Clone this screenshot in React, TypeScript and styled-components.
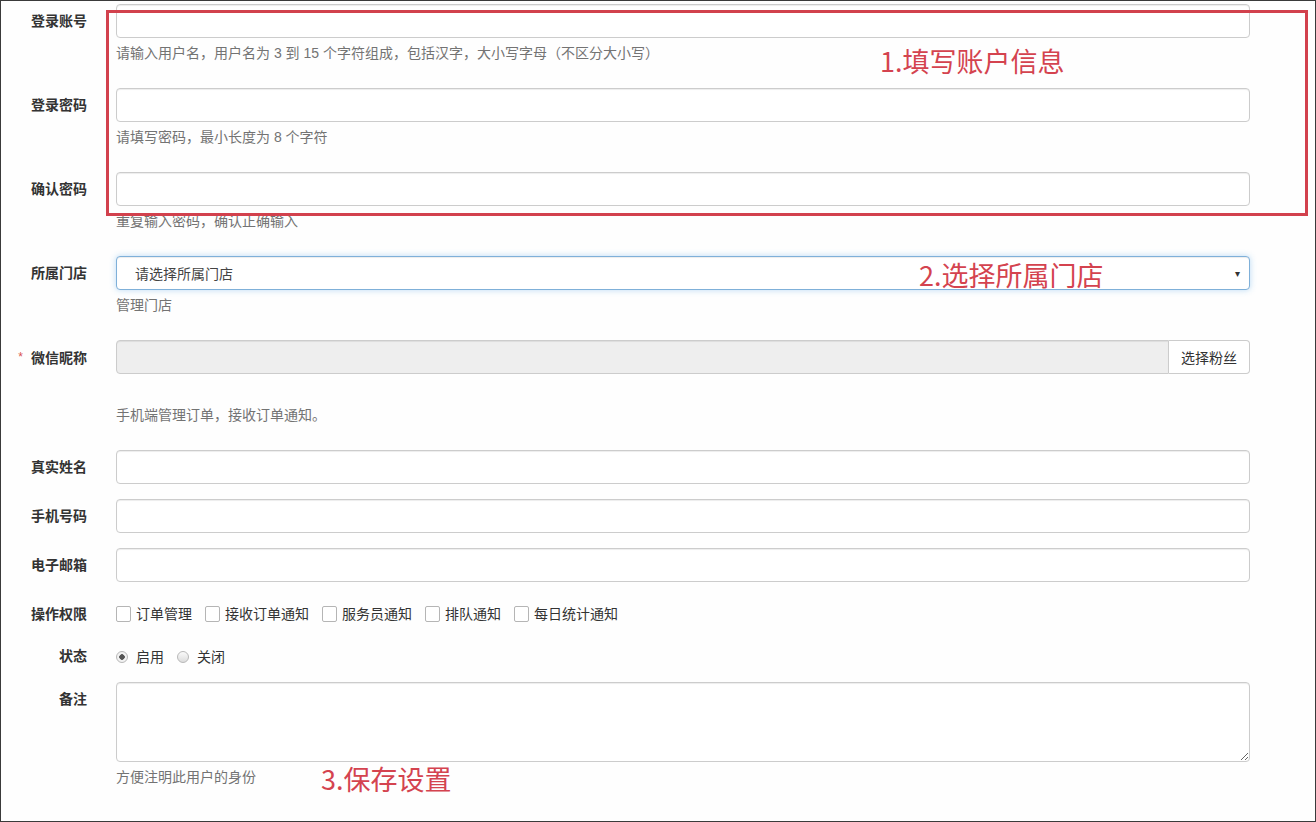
import React from 'react';
import styled, { createGlobalStyle } from 'styled-components';

const GlobalStyle = createGlobalStyle`
	html, body {
		margin: 0;
		padding: 0;
		background: #ffffff;
		overflow: hidden;
	}
	* {
		box-sizing: border-box;
	}
`;

const FONT = `"Liberation Sans", "Noto Sans CJK SC", sans-serif`;

interface IField {
	label: string;
	help?: string;
}

const accountFields: IField[] = [
	{
		label: '登录账号',
		help: '请输入用户名，用户名为 3 到 15 个字符组成，包括汉字，大小写字母（不区分大小写）',
	},
	{ label: '登录密码', help: '请填写密码，最小长度为 8 个字符' },
	{ label: '确认密码', help: '重复输入密码，确认正确输入' },
];

const profileFields: IField[] = [
	{ label: '真实姓名' },
	{ label: '手机号码' },
	{ label: '电子邮箱' },
];

const permissions = ['订单管理', '接收订单通知', '服务员通知', '排队通知', '每日统计通知'];

const App = () => {
	return (
		<>
			<GlobalStyle />
			<Page>
				<Form>
					{accountFields.map((field) => (
						<Row key={field.label}>
							<Label>{field.label}</Label>
							<Control>
								<TextInput type="text" />
								<Help>{field.help}</Help>
							</Control>
						</Row>
					))}

					<Row>
						<Label>所属门店</Label>
						<Control>
							<SelectBox>
								<span>请选择所属门店</span>
								<Caret>▾</Caret>
							</SelectBox>
							<Help>管理门店</Help>
						</Control>
					</Row>

					<Row>
						<Label>
							<Required>*</Required>微信昵称
						</Label>
						<Control>
							<InputGroup>
								<TextInput type="text" disabled $grouped />
								<AddonButton type="button">选择粉丝</AddonButton>
							</InputGroup>
							<Help $gap={31}>手机端管理订单，接收订单通知。</Help>
						</Control>
					</Row>

					{profileFields.map((field) => (
						<Row key={field.label}>
							<Label>{field.label}</Label>
							<Control>
								<TextInput type="text" />
							</Control>
						</Row>
					))}

					<Row>
						<Label>操作权限</Label>
						<InlineList>
							{permissions.map((name) => (
								<Choice key={name}>
									<CheckBox type="checkbox" />
									{name}
								</Choice>
							))}
						</InlineList>
					</Row>

					<Row>
						<Label $compact>状态</Label>
						<InlineList $compact>
							<Choice>
								<Radio type="radio" name="status" defaultChecked />
								启用
							</Choice>
							<Choice>
								<Radio type="radio" name="status" />
								关闭
							</Choice>
						</InlineList>
					</Row>

					<Row>
						<Label>备注</Label>
						<Control>
							<TextArea />
							<Help>方便注明此用户的身份</Help>
						</Control>
					</Row>
				</Form>

				<Frame />
				<Note style={{ left: 879, top: 45 }}>1.填写账户信息</Note>
				<Note style={{ left: 918, top: 259 }}>2.选择所属门店</Note>
				<Note style={{ left: 320, top: 763 }}>3.保存设置</Note>
			</Page>
		</>
	);
};

export default App;

const Page = styled.div`
	position: relative;
	width: 1316px;
	height: 822px;
	border: 1px solid #3a3a3a;
	background: #fefefe;
	font-family: ${FONT};
	font-size: 14px;
	color: #333;
	overflow: hidden;
`;

const Form = styled.form`
	display: flex;
	flex-direction: column;
	padding-top: 3px;
`;

const Row = styled.div`
	display: grid;
	grid-template-columns: 86px 1134px;
	column-gap: 29px;
	align-items: start;
	margin-bottom: 15px;
`;

const Label = styled.label<{ $compact?: boolean }>`
	padding-top: ${(p) => (p.$compact ? '0' : '7px')};
	line-height: 20px;
	text-align: right;
	font-weight: bold;
	color: #333;
	white-space: nowrap;
`;

const Required = styled.span`
	color: #d9534f;
	font-weight: normal;
	font-size: 12px;
	margin-right: 8px;
	vertical-align: 2px;
`;

const Control = styled.div`
	display: flex;
	flex-direction: column;
`;

const TextInput = styled.input<{ $grouped?: boolean }>`
	display: block;
	width: 100%;
	height: 34px;
	padding: 6px 12px;
	border: 1px solid #ccc;
	border-radius: ${(p) => (p.$grouped ? '4px 0 0 4px' : '4px')};
	background: #fff;
	box-shadow: inset 0 1px 1px rgba(0, 0, 0, 0.075);
	font-family: ${FONT};
	font-size: 14px;
	outline: none;

	&:disabled {
		background: #eeeeee;
	}
`;

const Help = styled.p<{ $gap?: number }>`
	margin: ${(p) => p.$gap ?? 5}px 0 10px;
	line-height: 20px;
	color: #737373;
	font-size: 14px;
`;

const SelectBox = styled.div`
	display: flex;
	align-items: center;
	justify-content: space-between;
	height: 34px;
	padding: 0 9px 0 18px;
	border: 1px solid #7fb0d9;
	border-radius: 4px;
	background: #fff;
	box-shadow: inset 0 1px 1px rgba(0, 0, 0, 0.075), 0 0 6px rgba(102, 175, 233, 0.45);
	color: #444;
`;

const Caret = styled.span`
	font-size: 10px;
	color: #333;
`;

const InputGroup = styled.div`
	display: flex;
`;

const AddonButton = styled.button`
	flex: 0 0 81px;
	height: 34px;
	border: 1px solid #ccc;
	border-left: none;
	border-radius: 0 4px 4px 0;
	background: #fff;
	font-family: ${FONT};
	font-size: 14px;
	color: #333;
	padding: 0;
`;

const InlineList = styled.div<{ $compact?: boolean }>`
	display: flex;
	align-items: center;
	gap: 13px;
	height: ${(p) => (p.$compact ? '21px' : '34px')};
`;

const Choice = styled.label`
	display: flex;
	align-items: center;
	gap: 5px;
	color: #333;
	line-height: 20px;
`;

const CheckBox = styled.input`
	appearance: none;
	margin: 0;
	width: 15px;
	height: 16px;
	border: 1px solid #b5b5b5;
	border-radius: 2px;
	background: #fff;
`;

const Radio = styled.input`
	appearance: none;
	margin: 0 3px 0 0;
	width: 12px;
	height: 12px;
	border: 1px solid #b8b8b8;
	border-radius: 50%;
	background: linear-gradient(#fafafa, #dcdcdc);

	&:checked {
		background: radial-gradient(circle, #555 0 2.5px, #f2f2f2 3px);
	}
`;

const TextArea = styled.textarea`
	display: block;
	width: 100%;
	height: 80px;
	padding: 6px 12px;
	border: 1px solid #ccc;
	border-radius: 4px;
	box-shadow: inset 0 1px 1px rgba(0, 0, 0, 0.075);
	font-family: ${FONT};
	font-size: 14px;
	outline: none;
	resize: vertical;
`;

const Frame = styled.div`
	position: absolute;
	left: 105px;
	top: 9px;
	width: 1202px;
	height: 206px;
	border: 3px solid #d2414d;
	pointer-events: none;
`;

const Note = styled.div`
	position: absolute;
	font-family: "Noto Sans CJK SC", sans-serif;
	font-size: 27px;
	line-height: 30px;
	color: #d4434f;
	white-space: nowrap;
`;
